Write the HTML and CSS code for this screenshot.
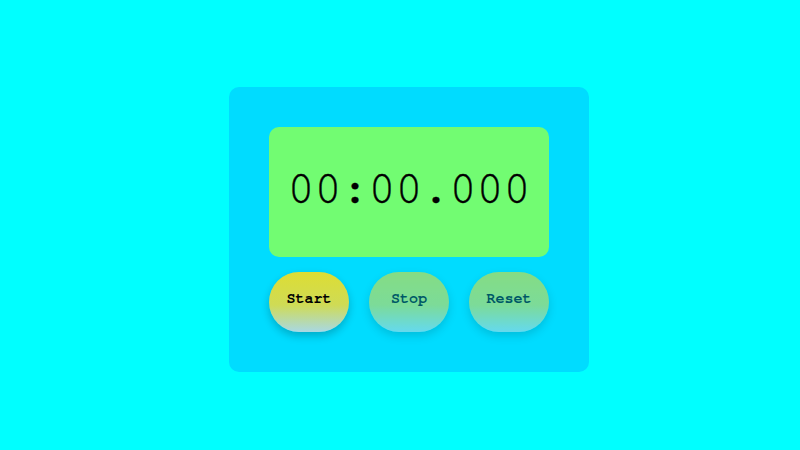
FILE: index.html
```html
<!DOCTYPE html>
<html>
<head>
<meta charset="utf-8">
<link rel="stylesheet" href="styles.css">
</head>
<body>
<div class="page">
  <div class="card">
    <div class="display">00:00.000</div>
    <div class="controls">
      <button class="btn">Start</button>
      <button class="btn disabled">Stop</button>
      <button class="btn disabled">Reset</button>
    </div>
  </div>
</div>
</body>
</html>
```
FILE: styles.css
```css
html, body {
  margin: 0;
  padding: 0;
  background: #00ffff;
}
.page {
  box-sizing: border-box;
  width: 800px;
  height: 450px;
  padding: 9px 0 0 18px;
  display: flex;
  align-items: center;
  justify-content: center;
}
.card {
  background: #00dcff;
  border-radius: 10px;
  padding: 40px;
  display: flex;
  flex-direction: column;
  gap: 15px;
}
.display {
  box-sizing: border-box;
  width: 280px;
  height: 130px;
  padding-bottom: 7px;
  background: #72fc72;
  border-radius: 10px;
  display: flex;
  align-items: center;
  justify-content: center;
  font-family: "FreeMono", "Liberation Mono", monospace;
  font-size: 45px;
  -webkit-text-stroke: 0.4px #000;
  color: #000;
}
.controls {
  display: flex;
  gap: 20px;
}
.btn {
  box-sizing: border-box;
  width: 80px;
  height: 60px;
  border: none;
  border-radius: 30px;
  background: linear-gradient(to bottom, #dddd33, #cfdb55 55%, #a8d8e4);
  font-family: "FreeMono", "Liberation Mono", monospace;
  font-weight: bold;
  font-size: 15px;
  color: #000;
  box-shadow: 0 4px 8px rgba(0, 0, 0, 0.22);
  padding: 0 0 8px;
}
.btn.disabled {
  opacity: 0.6;
}
```
